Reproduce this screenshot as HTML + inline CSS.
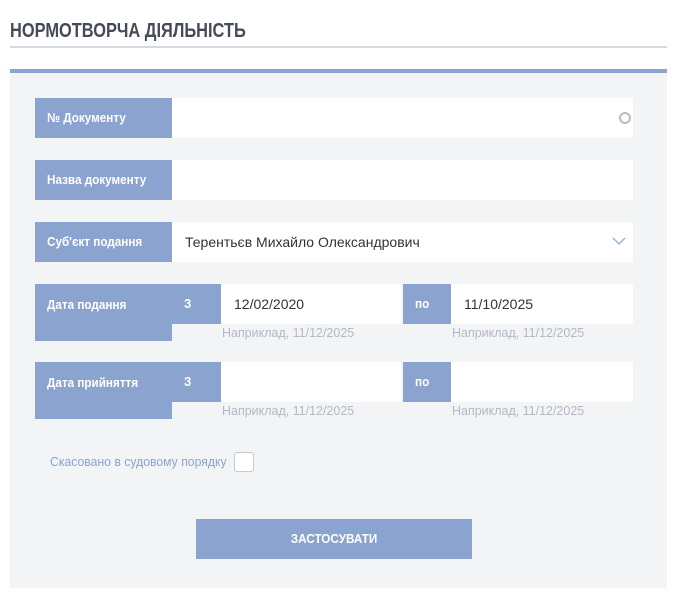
<!DOCTYPE html><html><head><meta charset="utf-8"><style>
body{margin:0;width:677px;height:600px;background:#fff;font-family:"Liberation Sans",sans-serif;position:relative;overflow:hidden}
.a{position:absolute}
.s{display:inline-block;transform-origin:left center;white-space:nowrap}
.lab{background:#8aa3cf;color:#fff;font-weight:bold;font-size:13px;box-sizing:border-box;padding-left:12px}
.lab .s{transform:scaleX(.9)}
.in{background:#fff}
.t{font-size:14px;color:#333}
.hint{color:#b3b8c2;font-size:13px}
.hint .s{transform:scaleX(.96)}
</style></head><body>
<div class="a" style="left:10px;top:20px;font-size:20px;font-weight:bold;color:#454b55"><span class="s" style="transform:scaleX(.82)">НОРМОТВОРЧА ДІЯЛЬНІСТЬ</span></div>
<div class="a" style="left:10px;top:46px;width:657px;height:2px;background:#d6d9e3"></div>
<div class="a" style="left:10px;top:69px;width:657px;height:4px;background:#8aa3cf"></div>
<div class="a" style="left:10px;top:73px;width:657px;height:515px;background:#f3f4f6"></div>

<div class="a lab" style="left:35px;top:98px;width:137px;height:40px;line-height:40px"><span class="s">№ Документу</span></div>
<div class="a in" style="left:172px;top:98px;width:461px;height:40px"></div>
<div class="a" style="left:619px;top:112px;width:8px;height:8px;border:2px solid #bbb;border-radius:50%"></div>

<div class="a lab" style="left:35px;top:160px;width:137px;height:40px;line-height:40px"><span class="s">Назва документу</span></div>
<div class="a in" style="left:172px;top:160px;width:461px;height:40px"></div>

<div class="a lab" style="left:35px;top:222px;width:137px;height:40px;line-height:40px"><span class="s">Суб'єкт подання</span></div>
<div class="a in t" style="left:172px;top:222px;width:461px;height:40px;line-height:40px;padding-left:13px;box-sizing:border-box">Терентьєв Михайло Олександрович</div>
<svg class="a" style="left:612px;top:236px" width="14" height="10"><path d="M1 2l6 6 6-6" fill="none" stroke="#9fb2d6" stroke-width="1.5"/></svg>

<div class="a lab" style="left:35px;top:284px;width:137px;height:57px;padding-top:13px"><span class="s">Дата подання</span></div>
<div class="a lab" style="left:172px;top:284px;width:49px;height:40px;line-height:40px"><span class="s">З</span></div>
<div class="a in t" style="left:221px;top:284px;width:180px;height:40px;line-height:40px;padding-left:13px;box-sizing:border-box">12/02/2020</div>
<div class="a lab" style="left:403px;top:284px;width:48px;height:40px;line-height:40px"><span class="s">по</span></div>
<div class="a in t" style="left:451px;top:284px;width:182px;height:40px;line-height:40px;padding-left:13px;box-sizing:border-box">11/10/2025</div>
<div class="a hint" style="left:222px;top:325px"><span class="s">Наприклад, 11/12/2025</span></div>
<div class="a hint" style="left:452px;top:325px"><span class="s">Наприклад, 11/12/2025</span></div>

<div class="a lab" style="left:35px;top:362px;width:137px;height:57px;padding-top:13px"><span class="s">Дата прийняття</span></div>
<div class="a lab" style="left:172px;top:362px;width:49px;height:40px;line-height:40px"><span class="s">З</span></div>
<div class="a in" style="left:221px;top:362px;width:180px;height:40px"></div>
<div class="a lab" style="left:403px;top:362px;width:48px;height:40px;line-height:40px"><span class="s">по</span></div>
<div class="a in" style="left:451px;top:362px;width:182px;height:40px"></div>
<div class="a hint" style="left:222px;top:403px"><span class="s">Наприклад, 11/12/2025</span></div>
<div class="a hint" style="left:452px;top:403px"><span class="s">Наприклад, 11/12/2025</span></div>

<div class="a" style="left:50px;top:454px;font-size:13px;color:#8aa3cf"><span class="s" style="transform:scaleX(.94)">Скасовано в судовому порядку</span></div>
<div class="a" style="left:234px;top:452px;width:18px;height:18px;border:1px solid #c4c8d0;border-radius:3px;background:#fff"></div>

<div class="a lab" style="left:196px;top:519px;width:276px;height:40px;line-height:40px;text-align:center;padding:0"><span class="s" style="transform:scaleX(.9);transform-origin:center">ЗАСТОСУВАТИ</span></div>
</body></html>
